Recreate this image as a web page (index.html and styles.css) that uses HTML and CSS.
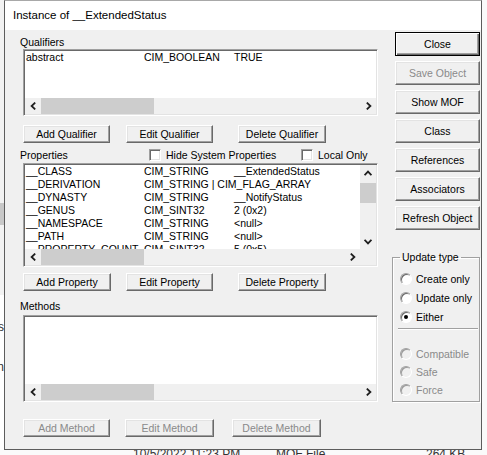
FILE: index.html
```html
<!DOCTYPE html>
<html>
<head>
<meta charset="utf-8">
<title>Instance of __ExtendedStatus</title>
<link rel="stylesheet" href="styles.css">
</head>
<body>
<div class="desk">
  <div class="lstrip">
    <div class="ls-a"></div>
    <div class="ls-b"></div>
    <div class="ls-c"></div>
    <div class="ls-gap1"></div>
    <div class="lg">s</div>
    <div class="ls-gap2"></div>
    <div class="lg">n</div>
  </div>

  <div class="win">
    <div class="title">Instance of __ExtendedStatus</div>
    <div class="wbody">
      <div class="lpane">
        <div class="lbl">Qualifiers</div>
        <div class="list qual">
          <div class="rows">
            <div class="row"><span>abstract</span><span>CIM_BOOLEAN</span><span>TRUE</span></div>
          </div>
          <div class="hbar">
            <span class="arr"><svg width="7" height="8" viewBox="0 0 7 8"><path d="M5.2 0.6 L1.6 4 L5.2 7.4" stroke="#1e1e1e" stroke-width="1.8" fill="none"/></svg></span>
            <span class="thumb tq"></span>
            <span class="track"></span>
            <span class="arr"><svg width="7" height="8" viewBox="0 0 7 8"><path d="M1.8 0.6 L5.4 4 L1.8 7.4" stroke="#1e1e1e" stroke-width="1.8" fill="none"/></svg></span>
          </div>
        </div>
        <div class="brow b1">
          <div class="btn w87">Add Qualifier</div>
          <div class="btn w87 g16">Edit Qualifier</div>
          <div class="btn w88 g25">Delete Qualifier</div>
        </div>

        <div class="phead">
          <div class="plbl">Properties</div>
          <div class="chk hide"><span class="cb"></span><span>Hide System Properties</span></div>
          <div class="chk"><span class="cb"></span><span>Local Only</span></div>
        </div>
        <div class="list props">
          <div class="pmain">
            <div class="rows">
              <div class="row"><span>__CLASS</span><span>CIM_STRING</span><span>__ExtendedStatus</span></div>
              <div class="row"><span>__DERIVATION</span><span>CIM_STRING | CIM_FLAG_ARRAY</span><span></span></div>
              <div class="row"><span>__DYNASTY</span><span>CIM_STRING</span><span>__NotifyStatus</span></div>
              <div class="row"><span>__GENUS</span><span>CIM_SINT32</span><span>2 (0x2)</span></div>
              <div class="row"><span>__NAMESPACE</span><span>CIM_STRING</span><span>&lt;null&gt;</span></div>
              <div class="row"><span>__PATH</span><span>CIM_STRING</span><span>&lt;null&gt;</span></div>
              <div class="row"><span>__PROPERTY_COUNT</span><span>CIM_SINT32</span><span>5 (0x5)</span></div>
            </div>
            <div class="vbar">
              <span class="arr"><svg width="8" height="7" viewBox="0 0 8 7"><path d="M0.6 5.2 L4 1.6 L7.4 5.2" stroke="#1e1e1e" stroke-width="1.8" fill="none"/></svg></span>
              <span class="thumb tv"></span>
              <span class="track"></span>
              <span class="arr"><svg width="8" height="7" viewBox="0 0 8 7"><path d="M0.6 1.8 L4 5.4 L7.4 1.8" stroke="#1e1e1e" stroke-width="1.8" fill="none"/></svg></span>
            </div>
          </div>
          <div class="hbar">
            <span class="arr"><svg width="7" height="8" viewBox="0 0 7 8"><path d="M5.2 0.6 L1.6 4 L5.2 7.4" stroke="#1e1e1e" stroke-width="1.8" fill="none"/></svg></span>
            <span class="thumb tp"></span>
            <span class="track"></span>
            <span class="arr"><svg width="7" height="8" viewBox="0 0 7 8"><path d="M1.8 0.6 L5.4 4 L1.8 7.4" stroke="#1e1e1e" stroke-width="1.8" fill="none"/></svg></span>
            <span class="corner"></span>
          </div>
        </div>
        <div class="brow b2">
          <div class="btn w88">Add Property</div>
          <div class="btn w87 g15">Edit Property</div>
          <div class="btn w88 g25">Delete Property</div>
        </div>

        <div class="lbl mlbl">Methods</div>
        <div class="list meth">
          <div class="rows"></div>
          <div class="hbar">
            <span class="arr"><svg width="7" height="8" viewBox="0 0 7 8"><path d="M5.2 0.6 L1.6 4 L5.2 7.4" stroke="#1e1e1e" stroke-width="1.8" fill="none"/></svg></span>
            <span class="thumb tq"></span>
            <span class="track"></span>
            <span class="arr"><svg width="7" height="8" viewBox="0 0 7 8"><path d="M1.8 0.6 L5.4 4 L1.8 7.4" stroke="#1e1e1e" stroke-width="1.8" fill="none"/></svg></span>
          </div>
        </div>
        <div class="brow b3">
          <div class="btn w87 dis">Add Method</div>
          <div class="btn w89 g15 dis">Edit Method</div>
          <div class="btn w89 g18 dis">Delete Method</div>
        </div>
      </div>

      <div class="rpane">
        <div class="btn rbtn def">Close</div>
        <div class="btn rbtn dis">Save Object</div>
        <div class="btn rbtn">Show MOF</div>
        <div class="btn rbtn">Class</div>
        <div class="btn rbtn">References</div>
        <div class="btn rbtn">Associators</div>
        <div class="btn rbtn">Refresh Object</div>

        <fieldset class="grp">
          <legend>Update type</legend>
          <div class="rad"><span class="rc"></span><span>Create only</span></div>
          <div class="rad"><span class="rc"></span><span>Update only</span></div>
          <div class="rad"><span class="rc"><span class="dot"></span></span><span>Either</span></div>
          <div class="sep"></div>
          <div class="rad r2 off first"><span class="rc"></span><span>Compatible</span></div>
          <div class="rad r2 off"><span class="rc"></span><span>Safe</span></div>
          <div class="rad r2 off"><span class="rc"></span><span>Force</span></div>
        </fieldset>
      </div>
    </div>
  </div>

  <div class="rstrip"></div>

  <div class="foot">
    <div class="fline">
      <span class="f1">10/5/2022 11:23 PM</span>
      <span class="f2">MOF File</span>
      <span class="f3">264 KB</span>
    </div>
  </div>
</div>
</body>
</html>
```

FILE: styles.css
```css
* { box-sizing: border-box; }
html, body { margin: 0; padding: 0; }
body {
  width: 487px;
  height: 455px;
  overflow: hidden;
  background: #ffffff;
  font-family: "Liberation Sans", Arial, sans-serif;
  font-size: 10.5px;
  color: #000;
}
.desk {
  display: grid;
  grid-template-columns: 4px 478px 5px;
  grid-template-rows: 450px 5px;
}

/* background strips */
.lstrip {
  grid-column: 1;
  grid-row: 1;
  display: flex;
  flex-direction: column;
  overflow: hidden;
}
.ls-a { height: 203px; background: #f2f2f2; flex: none; }
.ls-b { height: 22px; background: #c8c8c8; flex: none; }
.ls-c { height: 70px; background: #f2f2f2; flex: none; }
.ls-gap1 { height: 25px; flex: none; }
.ls-gap2 { height: 26px; flex: none; }
.lg {
  height: 14px;
  line-height: 14px;
  font-size: 12px;
  color: #333;
  overflow: hidden;
  white-space: nowrap;
  direction: rtl;
  flex: none;
}
.rstrip { grid-column: 3; grid-row: 1; background: #fafafa; }

/* window */
.win {
  grid-column: 2;
  grid-row: 1;
  border: 1px solid #5c5c5c;
  border-top-color: #a8a8a8;
  background: #f0f0f0;
  display: flex;
  flex-direction: column;
}
.title {
  height: 29px;
  flex: none;
  background: #fff;
  font-size: 11.5px;
  line-height: 29px;
  padding-left: 8px;
  color: #000;
}
.wbody {
  flex: 1;
  display: flex;
  padding-left: 15px;
}
.lpane {
  width: 358px;
  flex: none;
  padding-top: 6px;
  display: flex;
  flex-direction: column;
}
.rpane {
  width: 88px;
  flex: none;
  margin-left: 14px;
  padding-top: 2px;
  display: flex;
  flex-direction: column;
}

.lbl { height: 12px; line-height: 12px; flex: none; }
.mlbl { margin-top: 9px; }

/* list boxes */
.list {
  margin-left: 3px;
  width: 355px;
  flex: none;
  border: 1px solid;
  border-color: #a0a0a0 #ffffff #ffffff #a0a0a0;
  padding: 1px;
  box-shadow: inset 1px 1px #696969, inset -1px -1px #e3e3e3;
  background: #fff;
  display: flex;
  flex-direction: column;
}
.qual { height: 67px; margin-top: 1px; }
.props { height: 104px; margin-top: 1px; }
.meth { height: 87px; margin-top: 3px; }

.rows { flex: 1; overflow: hidden; min-height: 0; }
.row {
  display: grid;
  grid-template-columns: 118px 90px 1fr;
  height: 13px;
  line-height: 13px;
  white-space: nowrap;
  padding-left: 1px;
}
.pmain { flex: 1; display: flex; min-height: 0; overflow: hidden; }
.pmain .rows { flex: 1; }

.hbar {
  height: 16px;
  flex: none;
  display: flex;
  background: #f0f0f0;
}
.vbar {
  width: 16px;
  flex: none;
  display: flex;
  flex-direction: column;
  background: #f0f0f0;
}
.arr {
  width: 16px;
  height: 16px;
  flex: none;
  display: flex;
  align-items: center;
  justify-content: center;
}
.thumb { background: #cdcdcd; flex: none; }
.hbar .thumb { height: 16px; }
.tq { width: 113px; }
.tp { width: 103px; }
.tv { height: 20px; margin-top: 2px; }
.track { flex: 1; }
.corner { width: 16px; flex: none; }

/* buttons */
.btn {
  display: flex;
  align-items: center;
  justify-content: center;
  background: #f0f0f0;
  border: 1px solid;
  border-color: #ffffff #696969 #696969 #ffffff;
  box-shadow: inset -1px -1px #a0a0a0, inset 1px 1px #e3e3e3;
  white-space: nowrap;
  flex: none;
}
.brow { display: flex; margin-left: 3px; height: 18px; flex: none; }
.brow .btn { height: 18px; }
.b1 { margin-top: 9px; }
.b2 { margin-top: 6px; }
.b3 { margin-top: 17px; }
.w87 { width: 87px; }
.w88 { width: 88px; }
.w89 { width: 89px; }
.g15 { margin-left: 15px; }
.g16 { margin-left: 16px; }
.g18 { margin-left: 18px; }
.g25 { margin-left: 25px; }
.dis { color: #8a8a8a; }

.rbtn {
  width: 85px;
  height: 24px;
  margin-left: 3px;
  margin-bottom: 5px;
}
.def {
  border: 1px solid #000;
  box-shadow: inset 1px 1px #ffffff, inset -1px -1px #696969, inset -2px -2px #a0a0a0;
}

/* properties header */
.phead {
  display: flex;
  height: 13px;
  margin-top: 6px;
  flex: none;
  line-height: 13px;
}
.plbl { width: 129px; flex: none; }
.chk { display: flex; align-items: flex-start; flex: none; }
.chk.hide { width: 152px; }
.cb {
  width: 12px;
  height: 12px;
  flex: none;
  background: #fff;
  border: 1px solid;
  border-color: #a0a0a0 #ffffff #ffffff #a0a0a0;
  box-shadow: inset 1px 1px #696969, inset -1px -1px #e3e3e3;
  margin-right: 5px;
}
.chk span:last-child { line-height: 13px; margin-top: 0; }

/* group box */
.grp {
  margin: 16px 0 0 0;
  width: 88px;
  min-width: 0;
  border: 1px solid #a0a0a0;
  box-shadow: 1px 1px 0 #ffffff, inset 1px 1px #ffffff;
  padding: 6px 0 2px 7px;
  flex: none;
}
.grp legend {
  padding: 0 2px;
  margin: 0;
  line-height: 12px;
  font-size: 10.5px;
}
.rad {
  display: flex;
  align-items: center;
  height: 19px;
  white-space: nowrap;
}
.rad.r2 { height: 18px; }
.rad.first { margin-top: 15px; }
.rc {
  width: 12px;
  height: 12px;
  flex: none;
  border-radius: 50%;
  border: 1px solid;
  border-color: #a0a0a0 #ffffff #ffffff #a0a0a0;
  box-shadow: inset 1px 1px #696969;
  background: #fff;
  margin-right: 4px;
  display: flex;
  align-items: center;
  justify-content: center;
}
.dot {
  width: 4px;
  height: 4px;
  border-radius: 50%;
  background: #000;
}
.off { color: #8a8a8a; }
.off .rc {
  background: #f0f0f0;
  box-shadow: inset 1px 1px #9a9a9a;
}
.sep {
  height: 2px;
  border-top: 1px solid #a0a0a0;
  border-bottom: 1px solid #ffffff;
  margin: 2px 1px 0 -2px;
}

/* footer behind window */
.foot {
  grid-column: 1 / -1;
  grid-row: 2;
  overflow: hidden;
  background: #fafafa;
}
.fline {
  display: flex;
  margin-top: -2px;
  line-height: 12px;
  font-size: 12px;
  color: #333;
  white-space: nowrap;
}
.f1 { margin-left: 133px; width: 143px; flex: none; }
.f2 { width: 150px; flex: none; }
.f3 { flex: none; }
```
